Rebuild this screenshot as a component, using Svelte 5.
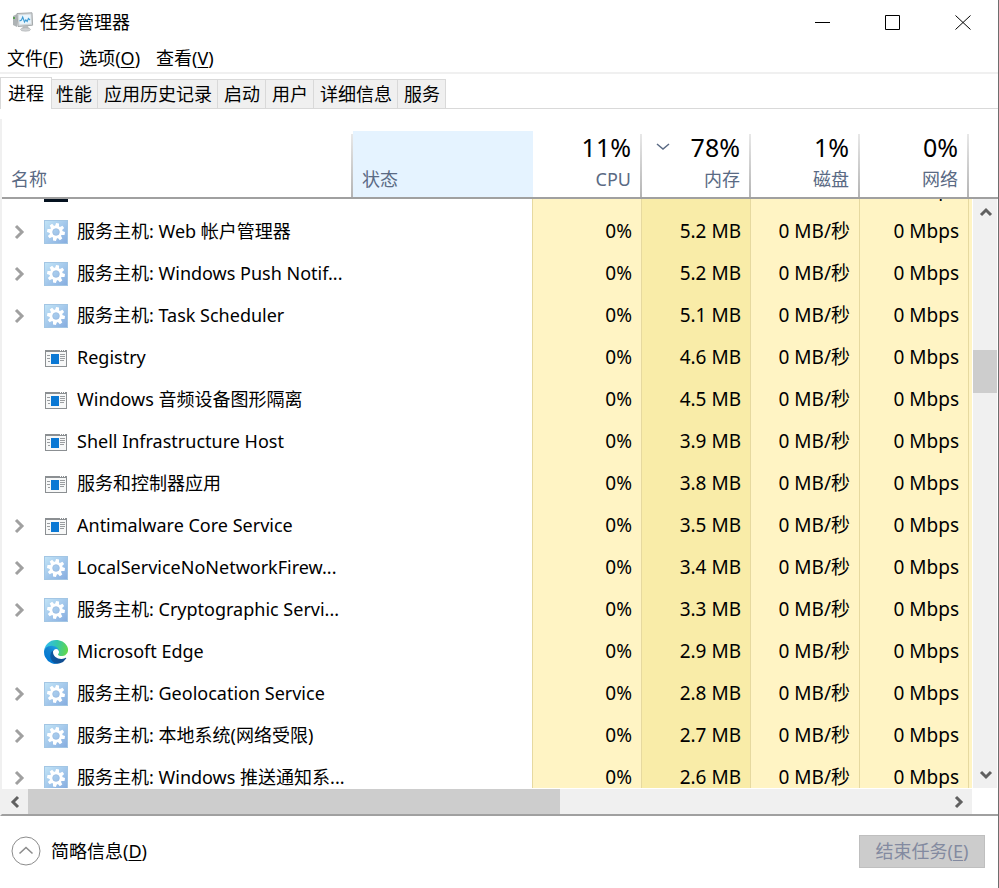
<script lang="ts">
  type Icon = 'console' | 'gear' | 'app' | 'edge';

  interface Process {
    name: string;
    icon: Icon;
    group: boolean;
    memory: string;
  }

  const menus = [
    { label: '文件', key: 'F' },
    { label: '选项', key: 'O' },
    { label: '查看', key: 'V' }
  ];

  const tabs = ['进程', '性能', '应用历史记录', '启动', '用户', '详细信息', '服务'];
  let activeTab = $state('进程');

  const totals = [
    { label: 'CPU', value: '11%', sorted: false },
    { label: '内存', value: '78%', sorted: true },
    { label: '磁盘', value: '1%', sorted: false },
    { label: '网络', value: '0%', sorted: false }
  ];

  const processes: Process[] = [
    { name: '', icon: 'console', group: false, memory: '5.3 MB' },
    { name: '服务主机: Web 帐户管理器', icon: 'gear', group: true, memory: '5.2 MB' },
    { name: '服务主机: Windows Push Notif...', icon: 'gear', group: true, memory: '5.2 MB' },
    { name: '服务主机: Task Scheduler', icon: 'gear', group: true, memory: '5.1 MB' },
    { name: 'Registry', icon: 'app', group: false, memory: '4.6 MB' },
    { name: 'Windows 音频设备图形隔离', icon: 'app', group: false, memory: '4.5 MB' },
    { name: 'Shell Infrastructure Host', icon: 'app', group: false, memory: '3.9 MB' },
    { name: '服务和控制器应用', icon: 'app', group: false, memory: '3.8 MB' },
    { name: 'Antimalware Core Service', icon: 'app', group: true, memory: '3.5 MB' },
    { name: 'LocalServiceNoNetworkFirew...', icon: 'gear', group: true, memory: '3.4 MB' },
    { name: '服务主机: Cryptographic Servi...', icon: 'gear', group: true, memory: '3.3 MB' },
    { name: 'Microsoft Edge', icon: 'edge', group: false, memory: '2.9 MB' },
    { name: '服务主机: Geolocation Service', icon: 'gear', group: true, memory: '2.8 MB' },
    { name: '服务主机: 本地系统(网络受限)', icon: 'gear', group: true, memory: '2.7 MB' },
    { name: '服务主机: Windows 推送通知系...', icon: 'gear', group: true, memory: '2.6 MB' }
  ];

  const teeth = [0, 45, 90, 135, 180, 225, 270, 315];
</script>

{#snippet columns()}
  <colgroup>
    <col />
    <col class="col-status" />
    <col class="col-value" />
    <col class="col-value" />
    <col class="col-value" />
    <col class="col-value" />
    <col class="col-rest" />
  </colgroup>
{/snippet}

{#snippet processIcon(icon: Icon)}
  {#if icon === 'gear'}
    <svg class="icon icon--gear" viewBox="0 0 24 24" aria-hidden="true">
      <rect x="0.5" y="0.5" width="23" height="23" fill="none" stroke="#a3c6e4" />
      {#each teeth as angle}
        <path d="M9.9 7L10.5 3.1h3l.6 3.9z" fill="#fff" transform="rotate({angle + 10} 12 12)" />
      {/each}
      <circle cx="12" cy="12" r="5" fill="none" stroke="#fff" stroke-width="3" />
      <circle cx="12" cy="12" r="3.2" fill="none" stroke="#9dbbe0" stroke-width="0.7" />
    </svg>
  {:else if icon === 'app'}
    <svg class="icon" viewBox="0 0 24 24" aria-hidden="true">
      <rect x="1.5" y="4.5" width="21" height="16" fill="#f7f8f8" stroke="#8b8f92" />
      <path d="M1 4h22v2H1z" fill="#8b8f92" />
      <path d="M16 4h1v1h-1zM18 4h1v1h-1zM20 4h1v1h-1z" fill="#fff" />
      <path d="M3 9.5h3M3 12.5h3M4 15.5h2M16 8.5h5M16 10.5h5M16 12.5h5M16 14.5h4" stroke="#9a9da0" />
      <path d="M7 8h8v10H7z" fill="#0a78d4" />
    </svg>
  {:else if icon === 'edge'}
    <svg class="icon" viewBox="0 0 256 256" aria-hidden="true">
      <defs>
        <linearGradient id="edge-deep" x1="60" y1="177" x2="236" y2="177" gradientUnits="userSpaceOnUse">
          <stop offset="0" stop-color="#0c59a4" />
          <stop offset="1" stop-color="#114a8b" />
        </linearGradient>
        <linearGradient id="edge-blue" x1="140" y1="90" x2="40" y2="220" gradientUnits="userSpaceOnUse">
          <stop offset="0" stop-color="#1b9de2" />
          <stop offset="0.4" stop-color="#1482ce" />
          <stop offset="1" stop-color="#0078d4" />
        </linearGradient>
        <linearGradient id="edge-green" x1="20" y1="60" x2="250" y2="110" gradientUnits="userSpaceOnUse">
          <stop offset="0" stop-color="#32bdea" />
          <stop offset="0.5" stop-color="#35c7a8" />
          <stop offset="1" stop-color="#62d84c" />
        </linearGradient>
      </defs>
      <path fill="url(#edge-deep)" d="M231 190.5c-3.4 1.8-6.9 3.4-10.5 4.7a101.5 101.5 0 0 1-35.9 6.4c-47.3 0-88.5-32.5-88.5-74.3 0-11.4 6.4-21.9 16.4-27.3-42.8 1.8-53.8 46.4-53.8 72.5 0 73.9 68.1 81.4 82.8 81.4 7.9 0 19.8-2.3 27-4.6l1.3-.4a128.3 128.3 0 0 0 66.6-52.8 4 4 0 0 0-5.4-5.6z" />
      <path fill="url(#edge-blue)" d="M105.7 241.4a79.2 79.2 0 0 1-22.7-21.3 80.7 80.7 0 0 1 29.5-120c3.2-1.5 8.5-4.1 15.6-4a32.4 32.4 0 0 1 25.7 13 31.9 31.9 0 0 1 6.3 18.7c0-.2 24.5-79.6-80-79.6-43.9 0-80 41.6-80 78.2a130.2 130.2 0 0 0 12.1 56 128 128 0 0 0 156.4 67 75.5 75.5 0 0 1-62.8-8z" />
      <path fill="url(#edge-green)" d="M152.3 148.9c-.9 1-3.3 2.5-3.3 5.7 0 2.6 1.7 5.1 4.7 7.3 14.5 10 41.7 8.7 41.7 8.7a60 60 0 0 0 30.6-8.5A61.9 61.9 0 0 0 256.4 109c.3-22.5-8-37.3-11.4-43.9C223.8 23.6 177.7 0 128 0A128 128 0 0 0 0 126.2c.5-36.5 36.8-66 80-66 3.5 0 23.5.3 42 10.1 16.3 8.6 24.9 19 30.8 29.2 6.2 10.6 7.3 24.1 7.3 29.5s-2.7 13.3-7.8 19.9z" />
    </svg>
  {:else}
    <svg class="icon" viewBox="0 0 24 24" aria-hidden="true">
      <path d="M0 0h24v24H0z" fill="#04111f" />
    </svg>
  {/if}
{/snippet}

<div class="window">
  <header class="titlebar">
    <svg class="titlebar__icon" viewBox="0 0 22 20" aria-hidden="true">
      <path d="M1 4l4-2v13l-4-2z" fill="#aeb3b5" />
      <path d="M1 5h2v2H1z" fill="#5c9f52" />
      <path d="M5 1.5L20 .8l.6 12.4L6 14.5z" fill="#d4d8da" stroke="#a4a9ab" />
      <path d="M7 3.2l11.5-.6.4 9L7.6 12.6z" fill="#e9f5fd" />
      <path d="M7.5 9l2-1 1.2-3 1.8 5 1.3-2 1.4 1.5 1.2-3L18 8" fill="none" stroke="#3e9bd3" stroke-width="1.1" />
      <path d="M11 14h5l1 3H10z" fill="#b8bcbe" />
      <ellipse cx="13.5" cy="17.5" rx="5" ry="1.7" fill="#cfd2d4" stroke="#a9adaf" stroke-width="0.6" />
    </svg>
    <h1>任务管理器</h1>
    <div class="titlebar__controls">
      <button aria-label="最小化">
        <svg viewBox="0 0 16 16"><path d="M0 8.5h15" /></svg>
      </button>
      <button aria-label="最大化">
        <svg viewBox="0 0 16 16"><path d="M.5 1.5h14v14H.5z" /></svg>
      </button>
      <button aria-label="关闭">
        <svg viewBox="0 0 16 16"><path d="M.5 1.5l15 14M15.5 1.5l-15 14" /></svg>
      </button>
    </div>
  </header>

  <nav class="menu">
    {#each menus as menu}
      <button>{menu.label}(<u>{menu.key}</u>)</button>
    {/each}
  </nav>

  <div class="tabs" role="tablist">
    {#each tabs as tab}
      <button
        role="tab"
        class:active={tab === activeTab}
        aria-selected={tab === activeTab}
        onclick={() => (activeTab = tab)}>{tab}</button
      >
    {/each}
  </div>

  <main class="panel">
    <div class="heading">
      <table>
        {@render columns()}
        <thead>
          <tr>
            <th class="separated">名称</th>
            <th class="hovered">状态</th>
            {#each totals as total}
              <th class="separated total">
                <div class="total__value">
                  {#if total.sorted}
                    <svg viewBox="0 0 14 8" aria-hidden="true"><path d="M1 1l6 5 6-5" /></svg>
                  {/if}
                  <span>{total.value}</span>
                </div>
                {total.label}
              </th>
            {/each}
            <td></td>
          </tr>
        </thead>
      </table>
    </div>

    <div class="list">
      <div class="list__rows">
        <table>
          {@render columns()}
          <tbody>
            {#each processes as process}
              <tr>
                <td>
                  <div class="process">
                    {#if process.group}
                      <button class="expand" aria-label="展开">
                        <svg viewBox="0 0 12 16"><path d="M2 2l6 6-6 6" /></svg>
                      </button>
                    {:else}
                      <span class="expand"></span>
                    {/if}
                    {@render processIcon(process.icon)}
                    <span class="process__name">{process.name}</span>
                  </div>
                </td>
                <td class="status"></td>
                <td class="value">0%</td>
                <td class="value value--sorted">{process.memory}</td>
                <td class="value">0 MB/秒</td>
                <td class="value">0 Mbps</td>
                <td class="value"></td>
              </tr>
            {/each}
          </tbody>
        </table>
      </div>

      <div class="scroll scroll--vertical">
        <button aria-label="向上滚动">
          <svg viewBox="0 0 14 14"><path d="M2 10l5-5 5 5" /></svg>
        </button>
        <div class="scroll__track">
          <div class="scroll__thumb"></div>
        </div>
        <button aria-label="向下滚动">
          <svg viewBox="0 0 14 14"><path d="M2 4l5 5 5-5" /></svg>
        </button>
      </div>
    </div>

    <div class="scroll scroll--horizontal">
      <button aria-label="向左滚动">
        <svg viewBox="0 0 14 14"><path d="M10 2L5 7l5 5" /></svg>
      </button>
      <div class="scroll__track">
        <div class="scroll__thumb"></div>
      </div>
      <button aria-label="向右滚动">
        <svg viewBox="0 0 14 14"><path d="M4 2l5 5-5 5" /></svg>
      </button>
    </div>
  </main>

  <footer class="footer">
    <button class="fewer">
      <svg viewBox="0 0 30 30" aria-hidden="true">
        <circle cx="15" cy="15" r="14" stroke="#8c8c8c" />
        <path d="M8.5 17.5l6.5-6 6.5 6" stroke="#8c8c8c" stroke-width="1.6" />
      </svg>
      <span>简略信息(<u>D</u>)</span>
    </button>
    <button class="end-task" disabled>结束任务(<u>E</u>)</button>
  </footer>
</div>

<style>
  :global(body) {
    margin: 0;
    background: #fff;
  }

  .window {
    display: flex;
    flex-direction: column;
    box-sizing: border-box;
    height: 100vh;
    border-right: 1px solid #6e6e6e;
    background: #fff;
    color: #000;
    font-family: 'Noto Sans', 'Noto Sans CJK SC', sans-serif;
    font-size: 18px;
    line-height: 24px;
  }

  button {
    padding: 0;
    border: 0;
    background: none;
    color: inherit;
    font: inherit;
  }

  svg {
    flex: none;
    display: block;
  }

  u {
    text-decoration-thickness: 1px;
    text-underline-offset: 2px;
  }

  .titlebar {
    display: flex;
    align-items: center;
    height: 43px;
    padding-left: 12px;
  }

  .titlebar__icon {
    width: 22px;
    height: 20px;
    margin-right: 6px;
  }

  h1 {
    flex: 1;
    margin: 0;
    font-size: 18px;
    font-weight: 400;
  }

  .titlebar__controls {
    display: flex;
    height: 100%;
  }

  .titlebar__controls button {
    display: grid;
    place-items: center;
    width: 70px;
  }

  .titlebar__controls svg {
    width: 16px;
    height: 16px;
    fill: none;
    stroke: #000;
  }

  .menu {
    display: flex;
    gap: 16px;
    height: 29px;
    padding-left: 7px;
    border-bottom: 2px solid #f0f0f0;
  }

  .tabs {
    display: flex;
    align-items: flex-end;
    height: 34px;
    border-bottom: 1px solid #d9d9d9;
  }

  .tabs button {
    height: 29px;
    padding: 0 5px 0 6px;
    border-top: 1px solid #d9d9d9;
    border-left: 1px solid #d9d9d9;
    background: #f0f0f0;
  }

  .tabs button:last-child {
    border-right: 1px solid #d9d9d9;
  }

  .tabs button.active {
    z-index: 1;
    height: 32px;
    margin: 0 -3px -1px 0;
    padding: 0 7px 2px;
    border-right: 1px solid #d9d9d9;
    background: #fff;
  }

  .panel {
    flex: 1;
    display: flex;
    flex-direction: column;
    min-height: 0;
    margin-top: 10px;
    border-left: 2px solid #f0f0f0;
    border-bottom: 2px solid #a0a0a0;
  }

  table {
    width: 100%;
    border-collapse: separate;
    border-spacing: 0;
    table-layout: fixed;
  }

  th,
  td {
    padding: 0;
  }

  .col-status {
    width: 180px;
  }

  .col-value {
    width: 109px;
  }

  .col-rest {
    width: 3px;
  }

  .heading {
    padding: 12px 26px 0 0;
    border-bottom: 2px solid #a0a0a0;
  }

  th {
    height: 58px;
    padding: 0 9px 8px;
    color: #5a6a84;
    font-weight: 400;
    line-height: 20px;
    text-align: left;
    vertical-align: bottom;
  }

  .separated {
    background: linear-gradient(#e8e8e8, #b4b4b4) right bottom / 2px 63px no-repeat;
  }

  .hovered {
    background: #e5f3ff;
  }

  .total {
    padding-right: 11px;
    text-align: right;
  }

  .total__value {
    display: flex;
    align-items: center;
    height: 32px;
    padding-bottom: 6px;
    color: #000;
    font-size: 25px;
  }

  .total__value span {
    flex: 1;
  }

  .total__value svg {
    width: 14px;
    height: 8px;
    margin-left: 5px;
    fill: none;
    stroke: #5a6a84;
    stroke-width: 1.5;
  }

  .list {
    flex: 1;
    display: flex;
    gap: 1px;
    min-height: 0;
  }

  .list__rows {
    flex: 1;
    overflow: hidden;
  }

  /* list is scrolled part of a row down */
  .list__rows table {
    margin-top: -30px;
  }

  .list__rows td {
    height: 42px;
    white-space: nowrap;
  }

  .process {
    display: flex;
    align-items: center;
    padding-left: 12px;
  }

  .process__name {
    padding-bottom: 2px;
  }

  .expand {
    width: 12px;
    margin-right: 18px;
  }

  .expand svg {
    width: 12px;
    height: 16px;
    fill: none;
    stroke: #a0a0a0;
    stroke-width: 3;
  }

  .icon {
    width: 24px;
    height: 24px;
    margin-right: 9px;
  }

  .icon--gear {
    background: linear-gradient(135deg, #c4e6f8, #84abdf);
  }

  .status {
    border-right: 1px solid #e6d9a0;
  }

  .list__rows .value {
    height: 40px;
    padding: 0 9px 2px 0;
    border-right: 1px solid #e6d9a0;
    background: #fff4c4;
    font-size: 19px;
    text-align: right;
  }

  .list__rows .value--sorted {
    background: #f9eca8;
  }

  .list__rows .value:last-child {
    padding-right: 0;
    border: 0;
  }

  .scroll {
    display: flex;
    background: #f0f0f0;
  }

  .scroll button {
    display: grid;
    place-items: center;
    width: 26px;
    height: 26px;
  }

  .scroll svg {
    width: 14px;
    height: 14px;
    fill: none;
    stroke: #606060;
    stroke-width: 3;
  }

  .scroll__track {
    flex: 1;
    display: flex;
  }

  .scroll__thumb {
    background: #cdcdcd;
  }

  .scroll--vertical {
    flex-direction: column;
    width: 24px;
    margin-right: 1px;
  }

  .scroll--vertical .scroll__track {
    flex-direction: column;
  }

  .scroll--vertical .scroll__thumb {
    height: 8%;
    margin-top: 125px;
  }

  .scroll--horizontal {
    height: 25px;
    margin: 1px 26px 0 0;
  }

  .scroll--horizontal .scroll__thumb {
    width: 58%;
  }

  .footer {
    display: flex;
    align-items: center;
    justify-content: space-between;
    height: 70px;
    padding: 0 13px 2px 11px;
  }

  .fewer {
    display: flex;
    align-items: center;
    gap: 10px;
  }

  .fewer svg {
    width: 30px;
    height: 30px;
    fill: none;
  }

  .end-task {
    width: 126px;
    height: 33px;
    border: 1px solid #bfbfbf;
    background: #cccccc;
    color: #838aa0;
  }
</style>
